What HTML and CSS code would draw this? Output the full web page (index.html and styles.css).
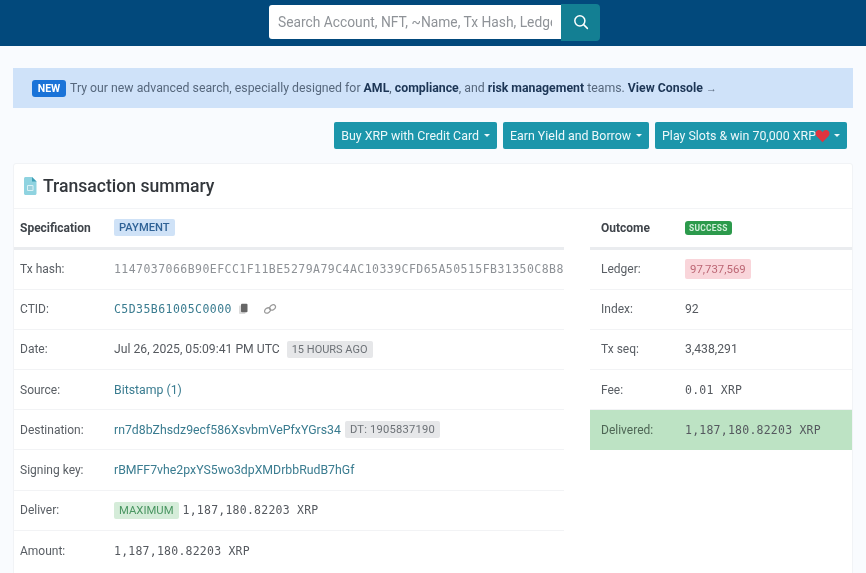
FILE: index.html
```html
<!DOCTYPE html>
<html lang="en">
<head>
<meta charset="utf-8">
<title>Transaction summary</title>
<link rel="stylesheet" href="styles.css">
</head>
<body>
<header class="topbar">
  <form class="search">
    <input class="search-input" type="text" placeholder="Search Account, NFT, ~Name, Tx Hash, Ledger">
    <button class="search-btn" type="button" aria-label="Search">
      <svg width="16" height="16" viewBox="0 0 14 14" fill="none" stroke="#fff" stroke-width="1.300" stroke-linecap="round"><circle cx="6" cy="6" r="4.400"/><path d="M9.300 9.300 12.600 12.600"/></svg>
    </button>
  </form>
</header>
<main class="page">
  <div class="notice">
    <span class="new">NEW</span>
    <span>Try our new advanced search, especially designed for <b>AML</b>, <b>compliance</b>, and <b>risk management</b> teams. <b>View Console</b> <span class="arrow">→</span></span>
  </div>
  <div class="actions">
    <a class="btn">Buy XRP with Credit Card<i class="caret"></i></a>
    <a class="btn">Earn Yield and Borrow<i class="caret"></i></a>
    <a class="btn">Play Slots &amp; win 70,000 XRP<svg class="heart" width="15" height="14" viewBox="0 0 15 14"><path fill="#e0343f" d="M7.500 13.200 1.600 7.200C-.2 5.300.3 2.400 2.300 1.400 4.200.5 6.300 1.200 7.500 3.200 8.700 1.200 10.800.5 12.700 1.400c2 1 2.500 3.900.7 5.800z"/></svg><i class="caret"></i></a>
  </div>
  <section class="card">
    <h1 class="card-title">
      <svg width="14" height="18" viewBox="0 0 14 18"><path fill="#8fd3e0" d="M1 1.500C1 .7 1.700 0 2.500 0H9l4.500 4.500v12c0 .8-.7 1.500-1.500 1.500H2.500C1.700 18 1 17.300 1 16.500z"/><path fill="#3f9fb5" d="M9 0l4.500 4.500H9z"/><rect x="4" y="8" width="6.500" height="6" rx="1" fill="#d9f1f5"/><path stroke="#3f9fb5" stroke-width=".8" d="M5 10h4.500M5 12h4.500"/></svg>
      Transaction summary
    </h1>
    <div class="tables">
      <div class="table table-main">
        <div class="row head"><span class="label">Specification</span><span class="tag tag-blue">PAYMENT</span></div>
        <div class="row"><span class="label">Tx hash:</span><span class="mono hash">1147037066B90EFCC1F11BE5279A79C4AC10339CFD65A50515FB31350C8B8</span></div>
        <div class="row"><span class="label">CTID:</span><a class="link mono">C5D35B61005C0000</a>
          <svg class="ico" width="11" height="12" viewBox="0 0 11 12"><rect x="1" y="2.500" width="6.500" height="8.500" rx="1" fill="#dcdcdc"/><rect x="3" y=".8" width="6.500" height="8.500" rx="1" fill="#666"/></svg>
          <svg class="ico ico-link" width="14" height="12" viewBox="0 0 14 12" fill="none" stroke="#999" stroke-width="1.200"><ellipse cx="4.500" cy="7.500" rx="3.200" ry="2.300" transform="rotate(-35 4.500 7.500)"/><ellipse cx="9.500" cy="4.500" rx="3.200" ry="2.300" transform="rotate(-35 9.500 4.500)"/></svg>
        </div>
        <div class="row"><span class="label">Date:</span><span class="value">Jul 26, 2025, 05:09:41 PM UTC</span><span class="tag tag-gray tag-ago">15 HOURS AGO</span></div>
        <div class="row"><span class="label">Source:</span><a class="link">Bitstamp (1)</a></div>
        <div class="row"><span class="label">Destination:</span><a class="link">rn7d8bZhsdz9ecf586XsvbmVePfxYGrs34</a><span class="tag tag-gray tag-dt">DT: 1905837190</span></div>
        <div class="row"><span class="label">Signing key:</span><a class="link">rBMFF7vhe2pxYS5wo3dpXMDrbbRudB7hGf</a></div>
        <div class="row"><span class="label">Deliver:</span><span class="tag tag-green">MAXIMUM</span><span class="mono amount">1,187,180.82203 XRP</span></div>
        <div class="row last"><span class="label">Amount:</span><span class="mono amount">1,187,180.82203 XRP</span></div>
      </div>
      <div class="table table-side">
        <div class="row head"><span class="label">Outcome</span><span class="tag tag-success">SUCCESS</span></div>
        <div class="row"><span class="label">Ledger:</span><span class="tag tag-red">97,737,569</span></div>
        <div class="row"><span class="label">Index:</span><span class="value">92</span></div>
        <div class="row"><span class="label">Tx seq:</span><span class="value">3,438,291</span></div>
        <div class="row"><span class="label">Fee:</span><span class="mono amount">0.01 XRP</span></div>
        <div class="row delivered"><span class="label">Delivered:</span><span class="mono amount">1,187,180.82203 XRP</span></div>
      </div>
    </div>
  </section>
</main>
</body>
</html>
```
FILE: styles.css
```css
* { box-sizing: border-box; }
html { background: #f9fbfe; }
body {
  margin: 0;
  height: 573px;
  overflow: hidden;
  background: #f9fbfe;
  color: #55595f;
  font-family: Roboto, "Liberation Sans", sans-serif;
  font-size: 12px;
  filter: blur(.35px);
}
.topbar {
  height: 46px;
  background: #02497c;
  display: flex;
  justify-content: center;
  padding-top: 4px;
}
.search { display: flex; height: 37px; margin-left: 3px; }
.search-input {
  width: 292px;
  height: 34px;
  margin-top: 1px;
  border: 0;
  border-radius: 3px 0 0 3px;
  background: #fff;
  padding: 0 9px;
  font: 13.800px Roboto, "Liberation Sans", sans-serif;
  color: #777;
}
.search-input::placeholder { color: #8f9398; opacity: 1; }
.search-btn {
  width: 39px;
  height: 37px;
  border: 0;
  border-radius: 0 4px 4px 0;
  background: #137f93;
  display: flex;
  align-items: center;
  justify-content: center;
  padding: 0 0 2px;
}
.page { padding: 22px 13px 0; }
.notice {
  height: 40px;
  background: #cfe2f9;
  display: flex;
  align-items: center;
  gap: 4px;
  padding: 0 0 0 19px;
  font-size: 12.300px;
  color: #56677c;
}
.notice b { color: #1c3555; font-weight: 700; }
.arrow { font-size: 11px; }
.new {
  width: 34px;
  height: 17px;
  line-height: 17px;
  text-align: center;
  background: #1a73d8;
  color: #fff;
  font-weight: 700;
  font-size: 10.500px;
  border-radius: 3px;
}
.actions {
  display: flex;
  justify-content: flex-end;
  gap: 6px;
  margin-top: 14px;
  padding-right: 6px;
}
.btn {
  height: 27px;
  display: flex;
  align-items: center;
  padding: 0 6px 0 7px;
  background: #1c96ab;
  color: #eef8fa;
  border-radius: 2px;
  font-size: 12.400px;
}
.caret {
  margin-left: 5px;
  margin-right: 1px;
  border: 3px solid transparent;
  border-top-color: #eef8fa;
  border-bottom: 0;
}
.heart { margin-left: -1px; margin-right: -1px; }
.card {
  margin-top: 14px;
  height: 420px;
  background: #fff;
  border: 1px solid #f1f3f6;
  border-radius: 3px;
}
.card-title {
  margin: 0;
  height: 45px;
  display: flex;
  align-items: center;
  gap: 6px;
  padding-left: 9px;
  font-size: 17.600px;
  font-weight: 500;
  color: #33373c;
  border-bottom: 1px solid #f3f4f6;
}
.tables { display: flex; gap: 26px; }
.table-main { width: 550px; }
.table-side { width: 262px; }
.row {
  height: 40.200px;
  display: flex;
  align-items: center;
  border-bottom: 1px solid #f2f3f5;
  white-space: nowrap;
  overflow: hidden;
}
.row.head { height: 40.500px; border-bottom: 3px solid #eaecef; }
.row.last { border-bottom: 0; }
.row .label { flex: none; color: #595e64; }
.table-main .label { width: 100px; padding-left: 6px; }
.table-side .label { width: 95px; padding-left: 11px; }
.head .label { font-weight: 700; color: #3f444a; }
.value { font-size: 12.200px; }
.mono { font-family: "DejaVu Sans Mono", monospace; }
.hash { font-size: 11.500px; letter-spacing: .45px; color: #8d9196; }
.amount { font-size: 11.500px; letter-spacing: .23px; color: #55595f; }
.link { color: #3a7c90; font-size: 12.300px; }
.link.mono { font-size: 11.500px; letter-spacing: .45px; }
.tag { border-radius: 2px; padding: 2px 5px; font-size: 11px; }
.tag-blue { background: #cfe2f7; color: #2f6296; font-weight: 500; padding: 2px 5px; font-size: 11.200px; }
.tag-gray { background: #e6e7e9; color: #6d7277; font-size: 11px; }
.tag-ago { margin-left: 7px; padding: 2px 5px; }
.tag-dt { margin-left: 4px; font-size: 11.200px; padding: 2px 5px; letter-spacing: .2px; }
.tag-green { background: #d5ecd9; color: #4a9662; margin-right: 4px; font-size: 11.300px; }
.tag-success {
  background: #2c9a4c;
  color: #cfeed8;
  font-size: 8.400px;
  font-weight: 700;
  padding: 2px 4px;
  letter-spacing: .3px;
  border-radius: 3px;
}
.tag-red { background: #f9d5da; color: #bc6674; padding: 3px 5px; font-size: 11.400px; }
.ico { margin-left: 6px; }
.ico-link { margin-left: 14px; }
.delivered { background: #bde3c4; border-bottom: 0; height: 40px; }
.delivered .label { color: #4e6655; }
```
